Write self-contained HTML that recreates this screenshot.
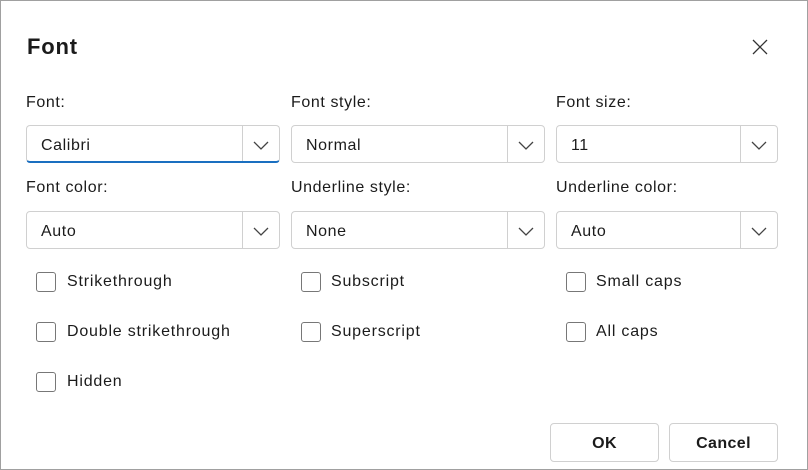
<!DOCTYPE html>
<html><head><style>
body{margin:0;width:808px;height:470px;overflow:hidden;background:#fff;font-family:"Segoe UI","Liberation Sans",sans-serif;color:#1b1b1b}
.frame{position:absolute;left:0;top:0;width:806px;height:468px;border:1px solid #a0a0a0}
.t{position:absolute;font-size:16px;letter-spacing:0.6px;white-space:nowrap}
.c{font-size:16px;letter-spacing:0.8px;top:auto}
.title{position:absolute;left:27px;top:34px;font-size:22px;font-weight:600;letter-spacing:0.8px}
.dd{position:absolute;height:38px;border:1px solid #d0d0d0;border-radius:4px;box-sizing:border-box;background:#fff}
.dd span{position:absolute;left:14px;top:11px;font-size:16px;letter-spacing:0.6px}
.dd .div{position:absolute;right:36px;top:0;bottom:0;border-left:1px solid #d0d0d0}
.dd svg{position:absolute;right:10px;top:14px}
.cb{position:absolute;width:18px;height:18px;border:1px solid #777;border-radius:3px}
.btn{position:absolute;top:423px;width:109px;height:39px;border:1px solid #d0d0d0;border-radius:4px;box-sizing:border-box;text-align:center;line-height:40px;font-size:16px;font-weight:600;letter-spacing:0.4px}
</style></head><body>
<div class="frame"></div>
<div class="title">Font</div>
<svg style="position:absolute;left:752px;top:39px" width="16" height="16"><path d="M1 1L15 15M15 1L1 15" stroke="#333" stroke-width="1.3"/></svg>

<div class="t" style="left:26px;top:94px">Font:</div>
<div class="t" style="left:291px;top:94px">Font style:</div>
<div class="t" style="left:556px;top:94px">Font size:</div>

<div class="dd" style="left:26px;top:125px;width:254px;border-bottom:2px solid #1a6fc0"><span>Calibri</span><div class="div"></div><svg width="16" height="10"><path d="M1 2L8 9L15 2" fill="none" stroke="#444" stroke-width="1.3"/></svg></div>
<div class="dd" style="left:291px;top:125px;width:254px"><span>Normal</span><div class="div"></div><svg width="16" height="10"><path d="M1 2L8 9L15 2" fill="none" stroke="#444" stroke-width="1.3"/></svg></div>
<div class="dd" style="left:556px;top:125px;width:222px"><span>11</span><div class="div"></div><svg width="16" height="10"><path d="M1 2L8 9L15 2" fill="none" stroke="#444" stroke-width="1.3"/></svg></div>

<div class="t" style="left:26px;top:179px">Font color:</div>
<div class="t" style="left:291px;top:179px">Underline style:</div>
<div class="t" style="left:556px;top:179px">Underline color:</div>

<div class="dd" style="left:26px;top:211px;width:254px"><span>Auto</span><div class="div"></div><svg width="16" height="10"><path d="M1 2L8 9L15 2" fill="none" stroke="#444" stroke-width="1.3"/></svg></div>
<div class="dd" style="left:291px;top:211px;width:254px"><span>None</span><div class="div"></div><svg width="16" height="10"><path d="M1 2L8 9L15 2" fill="none" stroke="#444" stroke-width="1.3"/></svg></div>
<div class="dd" style="left:556px;top:211px;width:222px"><span>Auto</span><div class="div"></div><svg width="16" height="10"><path d="M1 2L8 9L15 2" fill="none" stroke="#444" stroke-width="1.3"/></svg></div>

<div class="cb" style="left:36px;top:272px"></div><div class="t c" style="left:67px;top:273px">Strikethrough</div>
<div class="cb" style="left:301px;top:272px"></div><div class="t c" style="left:331px;top:273px">Subscript</div>
<div class="cb" style="left:566px;top:272px"></div><div class="t c" style="left:596px;top:273px">Small caps</div>
<div class="cb" style="left:36px;top:322px"></div><div class="t c" style="left:67px;top:323px">Double strikethrough</div>
<div class="cb" style="left:301px;top:322px"></div><div class="t c" style="left:331px;top:323px">Superscript</div>
<div class="cb" style="left:566px;top:322px"></div><div class="t c" style="left:596px;top:323px">All caps</div>
<div class="cb" style="left:36px;top:372px"></div><div class="t c" style="left:67px;top:373px">Hidden</div>

<div class="btn" style="left:550px">OK</div>
<div class="btn" style="left:669px">Cancel</div>
</body></html>
